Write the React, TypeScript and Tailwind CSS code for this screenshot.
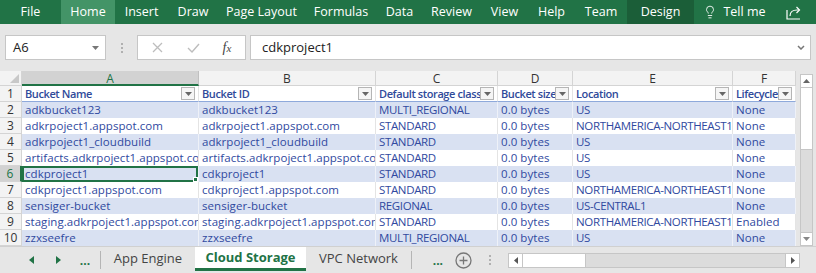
import { Lightbulb } from 'lucide-react'

const ribbonTabs = [
  { label: 'File', w: 'w-[61px]' },
  { label: 'Home', w: 'w-[54px]', active: true },
  { label: 'Insert', w: 'w-[53px]' },
  { label: 'Draw', w: 'w-[50px]' },
  { label: 'Page Layout', w: 'w-[87px]' },
  { label: 'Formulas', w: 'w-[72px]' },
  { label: 'Data', w: 'w-[45px]' },
  { label: 'Review', w: 'w-[59px]' },
  { label: 'View', w: 'w-[47px]' },
  { label: 'Help', w: 'w-[47px]' },
  { label: 'Team', w: 'w-[52px]' },
  { label: 'Design', w: 'w-[67px]', dark: true },
]

const columns = [
  { letter: 'A', w: 'w-[177px]' },
  { letter: 'B', w: 'w-[177px]' },
  { letter: 'C', w: 'w-[122px]' },
  { letter: 'D', w: 'w-[75px]' },
  { letter: 'E', w: 'w-[160px]' },
  { letter: 'F', w: 'w-[63px]' },
]

const headers = ['Bucket Name', 'Bucket ID', 'Default storage class', 'Bucket size', 'Location', 'Lifecycle']

const rows = [
  ['adkbucket123', 'adkbucket123', 'MULTI_REGIONAL', '0.0 bytes', 'US', 'None'],
  ['adkrpoject1.appspot.com', 'adkrpoject1.appspot.com', 'STANDARD', '0.0 bytes', 'NORTHAMERICA-NORTHEAST1', 'None'],
  ['adkrpoject1_cloudbuild', 'adkrpoject1_cloudbuild', 'STANDARD', '0.0 bytes', 'US', 'None'],
  ['artifacts.adkrpoject1.appspot.com', 'artifacts.adkrpoject1.appspot.com', 'STANDARD', '0.0 bytes', 'US', 'None'],
  ['cdkproject1', 'cdkproject1', 'STANDARD', '0.0 bytes', 'US', 'None'],
  ['cdkproject1.appspot.com', 'cdkproject1.appspot.com', 'STANDARD', '0.0 bytes', 'NORTHAMERICA-NORTHEAST1', 'None'],
  ['sensiger-bucket', 'sensiger-bucket', 'REGIONAL', '0.0 bytes', 'US-CENTRAL1', 'None'],
  ['staging.adkrpoject1.appspot.com', 'staging.adkrpoject1.appspot.com', 'STANDARD', '0.0 bytes', 'NORTHAMERICA-NORTHEAST1', 'Enabled'],
  ['zzxseefre', 'zzxseefre', 'MULTI_REGIONAL', '0.0 bytes', 'US', 'None'],
]

function FilterButton() {
  return (
    <div className="absolute z-10 right-[3px] top-[1px] w-[14px] h-[13px] border border-[#b5b5b5] bg-[#f5f5f5] flex items-center justify-center">
      <svg width="7" height="4" viewBox="0 0 7 4">
        <path d="M0 0h7L3.5 4z" fill="#666" />
      </svg>
    </div>
  )
}

function ShareIcon() {
  return (
    <svg width="16" height="15" viewBox="0 0 16 15" fill="none" stroke="white" strokeWidth="1.2">
      <path d="M1 5v9h13" />
      <path d="M4 11c0-4 3-6 7-6h2" />
      <path d="M10.5 2l3 3-3 3" />
    </svg>
  )
}

function VDots() {
  return (
    <div className="flex flex-col items-center justify-center gap-[2px]">
      <div className="w-[2px] h-[2px] bg-[#b0b0b0]" />
      <div className="w-[2px] h-[2px] bg-[#b0b0b0]" />
      <div className="w-[2px] h-[2px] bg-[#b0b0b0]" />
    </div>
  )
}

export default function App() {
  return (
    <div className="w-[816px] h-[273px] overflow-hidden flex flex-col bg-[#e6e6e6] font-['Segoe_UI','Open_Sans',sans-serif]">
      {/* Ribbon */}
      <div className="h-[24px] bg-[#217346] flex items-stretch text-white text-[12.5px] shrink-0">
        {ribbonTabs.map((t) => (
          <div
            key={t.label}
            className={`${t.w} flex items-center justify-center ${t.active ? 'bg-[#439467]' : ''} ${t.dark ? 'bg-[#1b5e38]' : ''}`}
          >
            {t.label}
          </div>
        ))}
        <div className="w-[81px] flex items-center justify-center gap-[6px]">
          <Lightbulb size={14} strokeWidth={1.5} />
          <span>Tell me</span>
        </div>
        <div className="flex-1 flex items-center justify-center pr-[4px]">
          <ShareIcon />
        </div>
      </div>

      {/* Formula bar */}
      <div className="h-[47px] shrink-0 flex items-start pt-[11px] pl-[5px] pr-[5px]">
        <div className="w-[101px] h-[25px] bg-white border border-[#c6c6c6] flex items-center justify-between pl-[7px] pr-[6px] text-[13px] text-[#222]">
          <span>A6</span>
          <svg width="7" height="4" viewBox="0 0 7 4">
            <path d="M0 0h7L3.5 4z" fill="#777" />
          </svg>
        </div>
        <div className="w-[31px] h-[25px] flex justify-center">
          <VDots />
        </div>
        <div className="w-[109px] h-[25px] bg-white border border-[#c6c6c6] flex items-center">
          <div className="w-[38px] flex justify-center">
            <svg width="11" height="11" viewBox="0 0 11 11" stroke="#bdbdbd" strokeWidth="1.3">
              <path d="M1 1l9 9M10 1l-9 9" />
            </svg>
          </div>
          <div className="w-[34px] flex justify-center">
            <svg width="13" height="10" viewBox="0 0 13 10" fill="none" stroke="#bdbdbd" strokeWidth="1.4">
              <path d="M1 5l4 4 7-8" />
            </svg>
          </div>
          <div className="w-[34px] flex justify-center">
            <span className="text-[#444] italic font-['Liberation_Serif',serif] text-[14px] leading-none">
              f<span className="text-[11px]">x</span>
            </span>
          </div>
        </div>
        <div className="ml-[4px] flex-1 h-[25px] bg-white border border-[#c6c6c6] flex items-center justify-between pl-[11px] pr-[5px] text-[13px] text-[#222]">
          <span>cdkproject1</span>
          <svg width="8" height="5" viewBox="0 0 8 5" fill="none" stroke="#777" strokeWidth="1.5">
            <path d="M1 1l3 3 3-3" />
          </svg>
        </div>
      </div>

      {/* Grid */}
      <div className="flex shrink-0 h-[175px]">
        <div className="flex flex-col bg-white">
          {/* column letters */}
          <div className="flex h-[15px] bg-[#f3f3f3] text-[12px] text-[#333] leading-[15px]">
            <div className="w-[22px] border-r border-b border-[#d4d4d4] relative">
              <svg className="absolute right-[2px] bottom-[2px]" width="9" height="9" viewBox="0 0 9 9">
                <path d="M9 0v9H0z" fill="#c8c8c8" />
              </svg>
            </div>
            {columns.map((c) => (
              <div
                key={c.letter}
                className={`${c.w} text-center border-r ${c.letter === 'A' ? 'bg-[#d2d2d2] text-[#217346] border-b-2 border-b-[#217346] border-r-[#c0c0c0]' : 'border-b border-[#d4d4d4]'}`}
              >
                {c.letter}
              </div>
            ))}
          </div>

          {/* header row */}
          <div className="flex h-[16px] text-[11px] leading-[15px]">
            <div className="w-[22px] bg-[#f3f3f3] border-r border-b border-[#d4d4d4] text-center text-[#333] text-[12px]">1</div>
            {headers.map((h, i) => (
              <div
                key={h}
                className={`${columns[i].w} relative bg-white border-r border-[#e4e4e4] border-b border-b-[#8ea9db] pl-[3px] font-semibold tracking-[-0.4px] text-[#2f4a9a] whitespace-nowrap overflow-hidden`}
              >
                {h}
                <FilterButton />
              </div>
            ))}
          </div>

          {/* data rows */}
          {rows.map((r, ri) => {
            const band = ri % 2 === 0
            const selected = ri === 4
            return (
              <div key={ri} className="flex h-[16px] text-[11.5px] leading-[16px]">
                <div
                  className={`w-[22px] border-r border-b border-[#d4d4d4] text-center text-[12px] ${selected ? 'bg-[#d2d2d2] text-[#217346] border-r-2 border-r-[#217346]' : 'bg-[#f3f3f3] text-[#333]'}`}
                >
                  {ri + 2}
                </div>
                {r.map((v, ci) => (
                  <div
                    key={ci}
                    className={`${columns[ci].w} relative border-r ${band ? 'bg-[#d9e1f2] border-[#eef1f8]' : 'bg-white border-[#e4e4e4]'} ${v === v.toUpperCase() ? 'tracking-[-0.35px]' : 'tracking-[0.05px]'} pl-[3px] text-[#3049a0] whitespace-nowrap overflow-hidden`}
                  >
                    {v}
                    {selected && ci === 0 && (
                      <>
                        <div className="absolute inset-0 border-2 border-[#217346]" />
                        <div className="absolute right-0 bottom-0 w-[5px] h-[5px] bg-[#217346] border border-white" />
                      </>
                    )}
                  </div>
                ))}
              </div>
            )
          })}
        </div>

        {/* vertical scrollbar */}
        <div className="flex-1 pl-[4px] pr-[3px] pt-[3px]">
          <div className="h-full border border-[#c6c6c6] bg-[#dcdcdc] flex flex-col">
            <div className="h-[13px] bg-white border-b border-[#c6c6c6] flex items-center justify-center">
              <svg width="7" height="4" viewBox="0 0 7 4">
                <path d="M0 4h7L3.5 0z" fill="#666" />
              </svg>
            </div>
            <div className="h-[62px] bg-white border-b border-[#c6c6c6]" />
            <div className="flex-1" />
            <div className="h-[13px] bg-white border-t border-[#c6c6c6] flex items-center justify-center">
              <svg width="7" height="4" viewBox="0 0 7 4">
                <path d="M0 0h7L3.5 4z" fill="#888" />
              </svg>
            </div>
          </div>
        </div>
      </div>

      {/* Sheet tabs */}
      <div className="flex-1 flex items-stretch border-t border-[#d0d0d0] text-[13px] text-[#444]">
        <div className="w-[44px] flex items-center justify-end pr-[10px]">
          <svg width="5" height="8" viewBox="0 0 5 8">
            <path d="M5 0v8L0 4z" fill="#217346" />
          </svg>
        </div>
        <div className="w-[26px] flex items-center justify-start pl-[12px]">
          <svg width="5" height="8" viewBox="0 0 5 8">
            <path d="M0 0v8l5-4z" fill="#217346" />
          </svg>
        </div>
        <div className="w-[30px] flex items-center justify-center text-[#217346] font-bold text-[12px] pt-[2px]">...</div>
        <div className="w-px my-[4px] bg-[#b5b5b5]" />
        <div className="w-[94px] flex items-center justify-center pb-[2px]">App Engine</div>
        <div className="w-[111px] bg-white flex items-center justify-center font-bold text-[#217346] border-b-[3px] border-[#217346] mb-[2px]">
          Cloud Storage
        </div>
        <div className="w-[105px] flex items-center justify-center pb-[2px]">VPC Network</div>
        <div className="w-px my-[4px] bg-[#b5b5b5]" />
        <div className="w-[36px] flex items-center justify-end pr-[5px] text-[#217346] font-bold text-[12px] pt-[2px]">...</div>
        <div className="w-[7px]" />
        <div className="flex items-center">
          <svg width="17" height="17" viewBox="0 0 17 17" fill="none" stroke="#777" strokeWidth="1.3">
            <circle cx="8.5" cy="8.5" r="7.5" />
            <path d="M8.5 4.5v8M4.5 8.5h8" />
          </svg>
        </div>
        <div className="w-[36px] flex justify-center">
          <VDots />
        </div>
        <div className="flex items-center">
          <div className="w-[292px] h-[15px] border border-[#c6c6c6] bg-[#dcdcdc] flex">
            <div className="w-[14px] bg-white border-r border-[#c6c6c6] flex items-center justify-center">
              <svg width="4" height="7" viewBox="0 0 4 7">
                <path d="M4 0v7L0 3.5z" fill="#555" />
              </svg>
            </div>
            <div className="w-[63px] bg-white border-r border-[#c6c6c6]" />
            <div className="flex-1" />
            <div className="w-[14px] bg-white border-l border-[#c6c6c6] flex items-center justify-center">
              <svg width="4" height="7" viewBox="0 0 4 7">
                <path d="M0 0v7l4-3.5z" fill="#555" />
              </svg>
            </div>
          </div>
        </div>
      </div>
    </div>
  )
}
